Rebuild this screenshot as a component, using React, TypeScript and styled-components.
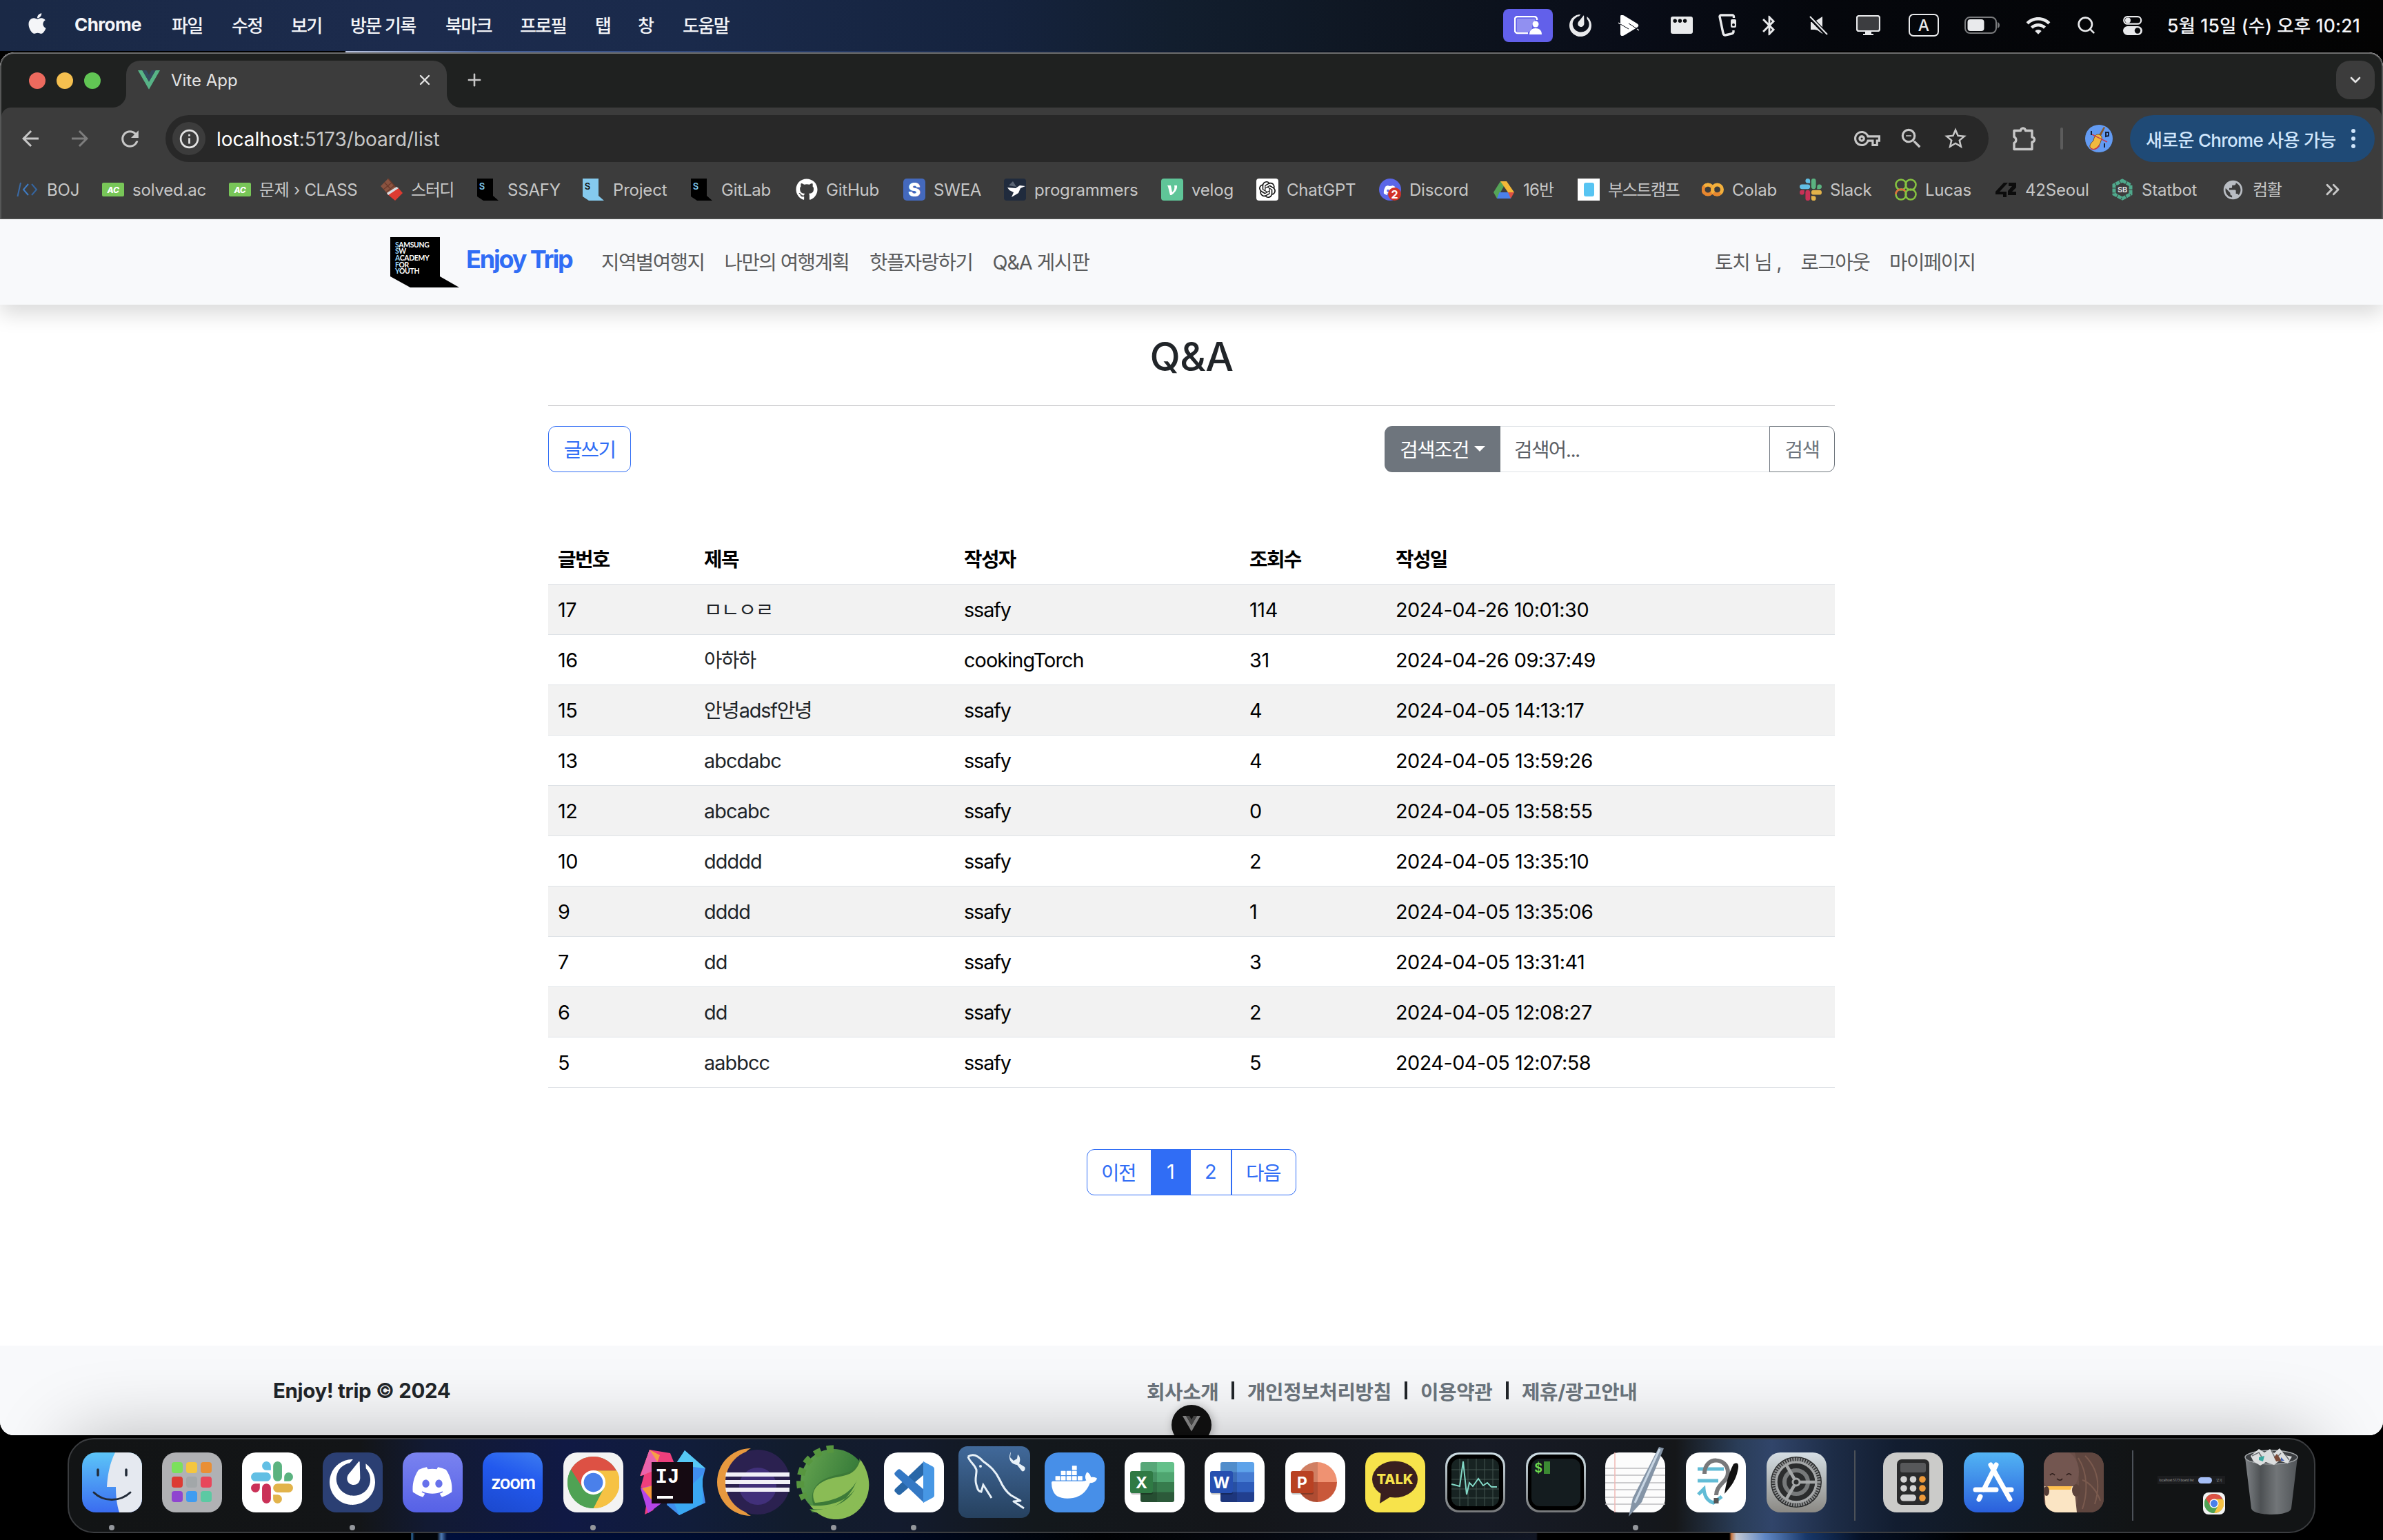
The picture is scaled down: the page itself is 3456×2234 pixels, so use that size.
import React from 'react';
import styled, { createGlobalStyle, css } from 'styled-components';
import { FaApple, FaGithub, FaDiscord } from 'react-icons/fa';
import { SiMattermost, SiDocker, SiOpenai } from 'react-icons/si';
import {
  MdArrowBack, MdArrowForward, MdRefresh, MdOutlineVpnKey, MdStarBorder,
  MdZoomOut, MdOutlineInfo, MdPublic, MdBluetooth, MdWifi,
} from 'react-icons/md';
import { Search, X, Plus, ChevronDown, ChevronsRight } from 'lucide-react';

const SANS = `Inter, 'Noto Sans CJK KR', sans-serif`;
const BLUE = '#306df5';

const GlobalStyle = createGlobalStyle`
  * { box-sizing: border-box; }
  body { margin: 0; background: #000; font-family: ${SANS}; }
  svg { display: block; flex: none; }
  a { color: inherit; text-decoration: none; }
`;

/* ---------- desktop and menu bar ---------- */

const Desktop = styled.div`
  width: 3456px;
  height: 2234px;
  overflow: hidden;
  display: flex;
  flex-direction: column;
  background:
    linear-gradient(90deg, transparent 596px, #3f8fd0 597px, #0a1b33 600px, #03060c 602px, #03060c 634px, #5b8ed0 640px, #001245 648px, #00103c 900px, #000b26 1290px, #020305 1600px, #0a0f1b 1960px, #141a29 2228px, #000 2230px, #000 2508px, #e8894a 2511px, #dfe6f2 2518px, #6d9ae0 2560px, #1c4078 2620px, #07142c 2700px, #000 2860px) 0 100% / 100% 12px no-repeat,
    #000;
`;

const MenuBar = styled.header`
  height: 76px;
  flex: none;
  display: flex;
  align-items: center;
  padding-bottom: 3px;
  color: #f4f5f8;
  font-size: 26px;
  font-weight: 500;
  white-space: nowrap;
  background:
    linear-gradient(90deg, #000 500px, #b9c4e0 502px, #47629c 700px, #2a4171 1100px, #0f1b30 1700px, #000 2300px) 0 100% / 100% 2px no-repeat,
    linear-gradient(90deg, #1a2946 0, #1c2b4d 600px, #1a2a4b 1000px, #15233e 1450px, #121e2e 1700px, #0e1520 2050px, #090d18 2350px, #05070c 2650px, #030303 3456px);
`;

const AppleMark = styled.span`
  width: 34px;
  margin: 0 37px 5px 37px;
`;

const MenuItem = styled.span<{ $w: number; $bold?: boolean }>`
  width: ${p => p.$w}px;
  padding-bottom: 3px;
  font-weight: ${p => (p.$bold ? 700 : 500)};
  letter-spacing: ${p => (p.$bold ? '-0.6px' : '-1.6px')};
`;

const StatusArea = styled.div`
  margin-left: auto;
  display: flex;
  align-items: center;
  padding-right: 33px;
`;

const StatusSlot = styled.span<{ $w: number }>`
  width: ${p => p.$w}px;
  display: flex;
  justify-content: center;
  color: #e9eaec;
`;

const SharePill = styled.span`
  width: 72px;
  height: 48px;
  border-radius: 8px;
  background: #6260ea;
  display: flex;
  align-items: center;
  justify-content: center;
`;

const InputSource = styled.span`
  width: 44px;
  height: 33px;
  border: 2px solid #e9eaec;
  border-radius: 7px;
  display: flex;
  align-items: center;
  justify-content: center;
  font-size: 23px;
  font-weight: 500;
`;

const Clock = styled.span`
  width: 280px;
  margin-left: 20px;
  padding-bottom: 3px;
  font-size: 26.5px;
  letter-spacing: 0.15px;
`;

/* ---------- browser window ---------- */

const Window = styled.section`
  height: 2006px;
  flex: none;
  display: flex;
  flex-direction: column;
  border-radius: 20px;
  overflow: hidden;
  background: #fff;
`;

const BrowserHead = styled.div`
  height: 242px;
  flex: none;
  background: #1f2120;
  border: 2px solid #565757;
  border-top-color: #6d6d6e;
  border-bottom: 0;
  border-radius: 20px 20px 0 0;
  display: flex;
  flex-direction: column;
`;

const TabStrip = styled.div`
  height: 78px;
  display: flex;
  align-items: flex-end;
`;

const Lights = styled.div`
  width: 161px;
  height: 78px;
  padding-left: 40px;
  display: flex;
  align-items: center;
  gap: 16px;
`;

const Light = styled.i<{ $c: string }>`
  width: 24px;
  height: 24px;
  border-radius: 50%;
  background: ${p => p.$c};
`;

const TabFlare = styled.i<{ $side: 'left' | 'right' }>`
  width: 20px;
  height: 20px;
  background: radial-gradient(circle at ${p => (p.$side === 'left' ? '0 0' : '100% 0')}, transparent 19.5px, #3c3c3c 20.5px);
`;

const Tab = styled.div`
  width: 465px;
  height: 68px;
  padding: 0 20px 12px 17px;
  border-radius: 20px 20px 0 0;
  background: #3c3c3c;
  color: #e3e3e3;
  display: flex;
  align-items: center;
  font-size: 24px;
`;

const TabTitle = styled.span`
  flex: 1;
  margin-left: 16px;
`;

const NewTab = styled.span`
  margin-left: 6px;
  height: 68px;
  padding: 14px 0 0;
  color: #c7c7c7;
`;

const TabSearch = styled.span`
  width: 56px;
  height: 56px;
  margin: 0 10px 12px auto;
  border-radius: 20px;
  background: #3c3c3c;
  color: #e3e3e3;
  display: flex;
  align-items: center;
  justify-content: center;
`;

const Toolbar = styled.div`
  height: 92px;
  padding-left: 6px;
  border-radius: 14px 14px 0 0;
  background: #3c3c3c;
  display: flex;
  align-items: center;
`;

const ToolSlot = styled.span<{ $w: number; $dim?: boolean }>`
  width: ${p => p.$w}px;
  display: flex;
  justify-content: center;
  color: ${p => (p.$dim ? '#7d7d7d' : '#c7c7c7')};
`;

const Omnibox = styled.div`
  width: 2644px;
  height: 68px;
  margin-left: 16px;
  padding: 0 16px 0 10px;
  border-radius: 34px;
  background: #282828;
  display: flex;
  align-items: center;
`;

const SiteInfo = styled.span`
  width: 48px;
  height: 48px;
  border-radius: 50%;
  background: #3c3c3c;
  color: #e3e3e3;
  display: flex;
  align-items: center;
  justify-content: center;
`;

const Address = styled.span`
  flex: 1;
  margin-left: 16px;
  padding-top: 2px;
  font-size: 28px;
  letter-spacing: 0;
  color: #c7c7c7;
  b { font-weight: 400; color: #fff; }
`;

const ToolDivider = styled.i`
  width: 4px;
  height: 32px;
  border-radius: 2px;
  background: #5c5c5c;
`;

const UpdateButton = styled.span`
  width: 355px;
  height: 68px;
  margin-left: 25px;
  padding: 0 28px 0 23px;
  border-radius: 34px;
  background: #1f4a76;
  color: #cfe5fb;
  display: flex;
  align-items: center;
  justify-content: space-between;
  font-size: 26px;
  font-weight: 500;
  letter-spacing: -0.7px;
  white-space: nowrap;
`;

const Avatar = styled.span`
  margin-left: 32px;
`;

const BookmarkBar = styled.div`
  height: 72px;
  padding: 12px 0 0 22px;
  background: #3c3c3c;
  border-bottom: 2px solid #494a4a;
  display: flex;
  align-items: flex-start;
  color: #c7c7c7;
  font-size: 24px;
  line-height: 34px;
  white-space: nowrap;
`;

const Bookmark = styled.span<{ $w: number; $ls?: number }>`
  width: ${p => p.$w}px;
  display: flex;
  gap: 12px;
  letter-spacing: ${p => p.$ls ?? -0.2}px;
`;

/* ---------- page ---------- */

const Page = styled.div`
  position: relative;
  flex: 1;
  display: flex;
  flex-direction: column;
  color: #212529;
  font-size: 28.8px;
  overflow: hidden;
`;

const Navbar = styled.nav`
  height: 124px;
  flex: none;
  padding: 0 592px 0 566px;
  background: #f8f9fb;
  box-shadow: 0 14.4px 28.8px rgba(0, 0, 0, 0.15);
  display: flex;
  align-items: center;
  white-space: nowrap;
`;

const Brand = styled.a`
  width: 196px;
  margin: 0 0 8px 10px;
  color: ${BLUE};
  font-size: 36px;
  font-weight: 700;
  letter-spacing: -2.15px;
`;

const NavLink = styled.a<{ $w: number; $ls?: number }>`
  width: ${p => p.$w}px;
  margin-right: 30.5px;
  padding-bottom: 3px;
  color: #5a5b5c;
  letter-spacing: ${p => p.$ls ?? -1.6}px;
`;

const UserLinks = styled.div`
  margin-left: auto;
  display: flex;
  a:last-child { margin-right: 0; }
`;

const Board = styled.main`
  width: 1866px;
  margin: 0 auto;
  display: flex;
  flex-direction: column;
`;

const Title = styled.h2`
  height: 146px;
  margin: 0;
  padding-top: 4px;
  display: flex;
  align-items: center;
  justify-content: center;
  font-size: 57.6px;
  font-weight: 450;
  letter-spacing: -0.6px;
`;

const Rule = styled.hr`
  width: 100%;
  height: 1px;
  margin: 0;
  border: 0;
  background: #c7c8ca;
`;

const Controls = styled.div`
  margin-top: 29px;
  display: flex;
  justify-content: space-between;
`;

const button = css`
  height: 67px;
  padding-bottom: 2px;
  display: flex;
  align-items: center;
  justify-content: center;
  letter-spacing: -1.6px;
  white-space: nowrap;
`;

const WriteButton = styled.a`
  ${button}
  width: 120px;
  border: 1px solid ${BLUE};
  border-radius: 11px;
  color: ${BLUE};
`;

const SearchGroup = styled.div`
  display: flex;
`;

const Condition = styled.span`
  ${button}
  width: 168px;
  gap: 8px;
  border-radius: 11px 0 0 11px;
  background: #6e757d;
  color: #fff;
`;

const Caret = styled.i`
  border: 8px solid transparent;
  border-top-color: #fff;
  border-bottom: 0;
`;

const Keyword = styled.span`
  ${button}
  width: 391px;
  padding-left: 20px;
  justify-content: flex-start;
  border: 1px solid #dee2e6;
  border-width: 1px 0;
  color: #5c6066;
`;

const SearchButton = styled.span`
  ${button}
  width: 95px;
  margin-left: -1px;
  border: 1px solid #6e757d;
  border-radius: 0 11px 11px 0;
  color: #6e757d;
`;

const Table = styled.table`
  width: 1866px;
  margin-top: 90px;
  table-layout: fixed;
  border-collapse: separate;
  border-spacing: 0;
  color: #000;
  text-align: left;
  th, td {
    height: 73px;
    padding: 1px 0 0 14px;
    border-bottom: 1px solid #dee2e6;
    line-height: 40px;
    white-space: nowrap;
  }
  th { font-weight: 700; letter-spacing: -1.6px; }
  tbody tr:nth-child(odd) td { background: #f2f2f2; }
`;

const Cell = styled.td<{ $ls?: number; $link?: boolean }>`
  letter-spacing: ${p => p.$ls ?? -0.9}px;
  color: ${p => (p.$link ? '#212529' : '#000')};
`;

const Pager = styled.div`
  margin: 89px auto 0;
  width: 304px;
  height: 67px;
  border: 1px solid ${BLUE};
  border-radius: 11px;
  overflow: hidden;
  display: flex;
  color: ${BLUE};
`;

const PagerItem = styled.a<{ $w: number; $active?: boolean; $line?: boolean }>`
  width: ${p => p.$w}px;
  display: flex;
  align-items: center;
  justify-content: center;
  padding: 0 2px 2px 0;
  letter-spacing: -1.6px;
  background: ${p => (p.$active ? BLUE : 'transparent')};
  color: ${p => (p.$active ? '#fff' : BLUE)};
  border-left: ${p => (p.$line ? `2px solid ${BLUE}` : '0')};
`;

const Footer = styled.footer`
  height: 130px;
  margin-top: auto;
  padding-left: 396px;
  background: #f8f9fb;
  display: flex;
  align-items: center;
  font-weight: 700;
  white-space: nowrap;
`;

const Copyright = styled.span`
  width: 1267px;
  font-size: 29.5px;
  letter-spacing: -0.35px;
`;

const FooterLink = styled.a<{ $w: number }>`
  width: ${p => p.$w}px;
  color: #6c757d;
  letter-spacing: -0.4px;
`;

const FooterBar = styled.i`
  width: 4px;
  height: 26px;
  margin: 0 19px;
  background: #212529;
`;

const DevtoolsButton = styled.div`
  position: absolute;
  left: 1699px;
  bottom: -14px;
  width: 58px;
  height: 58px;
  border-radius: 50%;
  background: #111;
  box-shadow: 2px 2px 14px rgba(0, 0, 0, 0.3);
  display: flex;
  justify-content: center;
  padding-top: 16px;
`;

/* ---------- dock ---------- */

const DockArea = styled.div`
  position: relative;
  padding-top: 4px;
  display: flex;
  justify-content: center;
`;

const DockBar = styled.div`
  width: 3260px;
  height: 138px;
  padding: 0 4px;
  border: 2px solid #3b3d40;
  border-radius: 38px;
  box-shadow: 0 0 110px rgba(0, 0, 0, 0.28);
  background: linear-gradient(90deg, #121415 0, #131517 420px, #121a33 520px, #101944 720px, #111d3a 900px, #121c2c 1060px, #131b2e 1200px, #13181c 1400px, #14161a 1700px, #171b26 2050px, #14171c 2300px, #151719 2330px, #2a3d58 2420px, #31456a 2470px, #1d2c46 2560px, #121d30 2650px, #111820 2800px, #121415 3000px);
  display: flex;
`;

const DockSlot = styled.div`
  width: 116.35px;
  display: flex;
  flex-direction: column;
  align-items: center;
`;

const DockIcon = styled.div`
  height: 122px;
  padding-top: 2px;
  display: flex;
  align-items: center;
`;

const RunningDot = styled.i`
  width: 8px;
  height: 8px;
  margin-top: 2px;
  border-radius: 50%;
  background: #94979c;
`;

const DockDivider = styled.i`
  width: 2px;
  height: 102px;
  margin: 16px 25.8px;
  background: #4c5158;
`;

const Tile = styled.div<{ $bg: string }>`
  width: 87px;
  height: 87px;
  border-radius: 20px;
  background: ${p => p.$bg};
  display: flex;
  align-items: center;
  justify-content: center;
  overflow: hidden;
  color: #fff;
`;

const ZoomWord = styled.span`
  font-size: 26px;
  font-weight: 600;
  letter-spacing: -1.4px;
`;

const LaunchGrid = styled.div`
  display: grid;
  grid-template-columns: repeat(3, 16px);
  gap: 5px;
`;

const LaunchDot = styled.i<{ $c: string }>`
  height: 16px;
  border-radius: 4px;
  background: ${p => p.$c};
`;

const Minimized = styled.div`
  width: 98px;
  height: 56px;
  margin-top: 38px;
  display: flex;
  flex-direction: column;
  align-items: flex-end;
  justify-content: space-between;
`;

const MiniBar = styled.div`
  width: 98px;
  height: 12px;
  padding: 0 4px 0 3px;
  background: #1c1d1f;
  color: #aaa;
  display: flex;
  align-items: center;
  justify-content: space-between;
  font-size: 4.4px;
  white-space: nowrap;
`;

const MiniPill = styled.i`
  width: 20px;
  height: 9px;
  border-radius: 5px;
  background: #a5bef5;
`;

const MiniTile = styled.div`
  width: 32px;
  height: 32px;
  border-radius: 8px;
  background: #f3f3f3;
  display: flex;
  align-items: center;
  justify-content: center;
`;

/* ---------- drawings ---------- */

const VueMark = ({ w, a = '#57b386', b = '#34495e' }: { w: number; a?: string; b?: string }) => (
  <svg width={w} height={w * 0.866} viewBox="0 0 32 27.7">
    <path d="M0 0h6.4L16 16.6 25.6 0H32L16 27.7z" fill={a} />
    <path d="M6.4 0h5.9L16 6.4 19.7 0h5.9L16 16.6z" fill={b} />
  </svg>
);

const ChromeMark = ({ s }: { s: number }) => (
  <svg width={s} height={s} viewBox="0 0 100 100">
    <circle cx="50" cy="50" r="50" fill="#4fa254" />
    <path d="M50 27H95.500A50 50 0 0 1 50 100L70 61z" fill="#f6c244" />
    <path d="M50 27H94.500A50 50 0 0 0 6.700 25L29 62z" fill="#dd5144" />
    <path d="M6.700 25L30 61.500 50 73 70 61.500 50 100A50 50 0 0 1 6.700 25z" fill="#4fa254" />
    <circle cx="50" cy="50" r="23.500" fill="#fff" />
    <circle cx="50" cy="50" r="18.500" fill="#4a80ea" />
  </svg>
);

const SlackMark = ({ s }: { s: number }) => (
  <svg width={s} height={s} viewBox="0 0 122.800 122.800">
    <path fill="#ca3157" d="M25.800 77.600a12.900 12.900 0 1 1-12.900-12.900h12.900zM32.300 77.600a12.900 12.900 0 0 1 25.800 0v32.300a12.900 12.900 0 0 1-25.800 0z" />
    <path fill="#62bfe4" d="M45.200 25.800a12.900 12.900 0 1 1 12.900-12.900v12.900zM45.200 32.300a12.900 12.900 0 0 1 0 25.800H12.900a12.900 12.900 0 0 1 0-25.800z" />
    <path fill="#5bb380" d="M97 45.200a12.900 12.900 0 1 1 12.900 12.900H97zM90.500 45.200a12.900 12.900 0 0 1-25.800 0V12.900a12.900 12.900 0 0 1 25.800 0z" />
    <path fill="#e2b34a" d="M77.600 97a12.900 12.900 0 1 1-12.900 12.900V97zM77.600 90.500a12.900 12.900 0 0 1 0-25.800h32.300a12.900 12.900 0 0 1 0 25.800z" />
  </svg>
);

const Puzzle = () => (
  <svg width="36" height="38" viewBox="0 0 36 38" fill="none" stroke="#c7c7c7" strokeWidth="3.400" strokeLinejoin="round">
    <path d="M3 7.500h9.500a3.500 3.500 0 0 1 7 0H29v9.500a3.500 3.500 0 0 1 0 7v10.500H3v-9a5 5 0 0 0 0-9z" />
  </svg>
);

const svgText = { fontFamily: SANS, textAnchor: 'middle' as const };

const Ssafy = ({ c, t }: { c: string; t: string }) => (
  <svg width="32" height="32" viewBox="0 0 32 32">
    <path d="M0 0h23v25l8 7H9l-9-6z" fill={c} />
    <text x="7" y="16" fontSize="13" fontWeight="600" fill={t} {...svgText}>S</text>
  </svg>
);

const Ac = () => (
  <svg width="32" height="32" viewBox="0 0 32 32">
    <rect y="6" width="32" height="20" rx="2" fill="#78c658" />
    <text x="16" y="20.500" fontSize="12" fontWeight="800" fontStyle="italic" fill="#fff" {...svgText}>AC</text>
  </svg>
);

const markIcons: Record<string, React.ReactNode> = {
  boj: (
    <svg width="32" height="32" viewBox="0 0 32 32" fill="none" strokeWidth="2">
      <path d="M6 6L1.500 26" stroke="#3a6ba8" /><path d="M17 8l-7 8 7 8" stroke="#3f7cc4" /><path d="M22 8l7 8-7 8" stroke="#3565a0" />
    </svg>
  ),
  ac: <Ac />,
  choco: (
    <svg width="32" height="32" viewBox="0 0 32 32">
      <path d="M11 0L24 15 10 22 0 11z" fill="#8a5340" /><path d="M5.500 5.500l12 13M11 0l12 14M16 6L4 16M20 10L8 20" stroke="#6b3a2b" strokeWidth="1.200" />
      <path d="M25 13l7 8-11 11L9 22z" fill="#dd3b31" /><path d="M23 12l3 2L11 24l-2-3z" fill="#d9dde2" />
    </svg>
  ),
  ssafy: <Ssafy c="#000" t="#7ec8ee" />,
  project: <Ssafy c="#85caee" t="#111" />,
  github: <FaGithub size={32} color="#fff" />,
  swea: (
    <svg width="32" height="32" viewBox="0 0 32 32"><rect width="32" height="32" rx="5" fill="#4469bd" />
      <text x="16" y="25.500" fontSize="27" fontWeight="900" fill="#fff" {...svgText}>S</text></svg>
  ),
  prog: (
    <svg width="32" height="32" viewBox="0 0 32 32"><rect width="32" height="32" rx="4" fill="#202b3d" />
      <path d="M7 10l6-6 5 8z" fill="#5c6675" /><path d="M5 13l12 1 6-4 8 1-7 3-3 7-10 6 3-7-6-3z" fill="#fff" /></svg>
  ),
  velog: (
    <svg width="32" height="32" viewBox="0 0 32 32"><rect width="32" height="32" rx="4" fill="#5fc598" />
      <path d="M9 10h5l2 10c3-3 4-6 3-10h4c1 6-4 11-8 14h-2L10 12z" fill="#fff" /></svg>
  ),
  gpt: (
    <svg width="32" height="32" viewBox="0 0 32 32"><rect width="32" height="32" rx="4" fill="#fff" />
      <g transform="translate(4 4)"><SiOpenai size={24} color="#111" /></g></svg>
  ),
  discord: (
    <svg width="32" height="32" viewBox="0 0 32 32"><circle cx="16" cy="16" r="16" fill="#5b66e8" />
      <g transform="translate(6 7)"><FaDiscord size={20} color="#fff" /></g>
      <circle cx="22.500" cy="22.500" r="9.500" fill="#d13228" /><text x="22.500" y="28.500" fontSize="16" fontWeight="700" fill="#fff" {...svgText}>2</text></svg>
  ),
  drive: (
    <svg width="32" height="32" viewBox="0 0 32 32"><path d="M11 4h9l-9.500 17L6 29 1 20z" fill="#55a457" /><path d="M11 4h9l11 16h-9z" fill="#f3b838" />
      <path d="M21 20h10l-5 9h-8z" fill="#dd5144" /><path d="M9.500 20H22l4 9H6z" fill="#4a80ea" /></svg>
  ),
  boost: (
    <svg width="32" height="32" viewBox="0 0 32 32"><rect width="32" height="32" fill="#fff" /><rect x="9" y="6" width="15" height="20" rx="3" fill="#57c4f2" /></svg>
  ),
  colab: (
    <svg width="32" height="32" viewBox="0 0 32 32" fill="none" strokeWidth="5"><circle cx="9" cy="16" r="7" stroke="#e7872f" />
      <path d="M4 11a7 7 0 0 1 10 0" stroke="#f3b03c" /><circle cx="22.500" cy="16" r="7" stroke="#f3b03c" /><path d="M27 21a7 7 0 0 1-10 0" stroke="#e7872f" /></svg>
  ),
  slack: <SlackMark s={32} />,
  lucas: (
    <svg width="32" height="32" viewBox="0 0 32 32" fill="none" strokeWidth="2.600" stroke="#86c340"><circle cx="9" cy="9" r="7.500" /><circle cx="23" cy="9" r="7.500" />
      <circle cx="23" cy="23" r="7.500" /><circle cx="9" cy="23" r="7.500" /><path d="M9 15.500a7.500 7.500 0 0 0-7.500 7.500M9 15.500a7.500 7.500 0 0 1 6 3" stroke="#e06d3b" /></svg>
  ),
  seoul: (
    <svg width="32" height="32" viewBox="0 0 32 32" fill="#0c0c0c"><path d="M13 6h6L7 19h10v8h-5v-4H1v-4z" /><path d="M20 6h11v7l-6 6h6v5H19v-6l6-7h-5z" /></svg>
  ),
  statbot: (
    <svg width="32" height="32" viewBox="0 0 32 32"><path d="M16 3l12 6.500v13L16 29 4 22.500v-13z" fill="none" stroke="#4fa98c" strokeWidth="5" strokeDasharray="6 1" />
      <path d="M16 6l9 5v10l-9 5-9-5V11z" fill="#3c3c3c" /><text x="16" y="20" fontSize="11" fontWeight="700" fill="#ddd" {...svgText}>SB</text></svg>
  ),
  globe: <MdPublic size={33} color="#b9bdc3" />,
};

const bookmarks: [string, string, number, number?][] = [
  ['boj', 'BOJ', 124], ['ac', 'solved.ac', 184], ['ac', '문제 › CLASS', 220, -0.3], ['choco', '스터디', 140, -1.4],
  ['ssafy', 'SSAFY', 153], ['project', 'Project', 157], ['ssafy', 'GitLab', 152], ['github', 'GitHub', 156],
  ['swea', 'SWEA', 146], ['prog', 'programmers', 228], ['velog', 'velog', 138], ['gpt', 'ChatGPT', 178],
  ['discord', 'Discord', 165], ['drive', '16반', 123, -0.8], ['boost', '부스트캠프', 180, -1.4], ['colab', 'Colab', 142],
  ['slack', 'Slack', 138], ['lucas', 'Lucas', 145], ['seoul', '42Seoul', 169], ['statbot', 'Statbot', 160], ['globe', '컴활', 145, -1.4],
];

const menus: [string, number][] = [
  ['파일', 87], ['수정', 86], ['보기', 86], ['방문 기록', 138], ['북마크', 108], ['프로필', 109], ['탭', 62], ['창', 65], ['도움말', 80],
];

const StatusIcons = () => (
  <>
    <StatusSlot $w={72}>
      <SharePill>
        <svg width="40" height="28" viewBox="0 0 40 28" fill="none">
          <path d="M20 25H5a4 4 0 0 1-4-4V5a4 4 0 0 1 4-4h24a4 4 0 0 1 4 4v1" stroke="#fff" strokeWidth="2.500" />
          <path d="M4 4h26v4l-4 4v6l-4 5H4z" fill="#9190f1" /><circle cx="31" cy="12" r="4.500" fill="#fff" /><path d="M22 27c0-6 4-9 9-9s9 3 9 9z" fill="#fff" />
        </svg>
      </SharePill>
    </StatusSlot>
    <StatusSlot $w={80}><SiMattermost size={32} /></StatusSlot>
    <StatusSlot $w={60}>
      <svg width="30" height="30" viewBox="0 0 30 30"><path d="M4 0h2c1 0 2 0 3 1l18 11c3 2 3 4 0 6L9 29c-4 2-6 1-6-2V3c0-1 0-3 1-3z" fill="#fff" /><path d="M3 13l12 7M15 12l14 9" stroke="#080b14" strokeWidth="1" fill="none" /><path d="M0 11l3 2M27 20l3 2" stroke="#fff" strokeWidth="1.200" /></svg>
    </StatusSlot>
    <StatusSlot $w={93}>
      <svg width="32" height="25" viewBox="0 0 32 25"><rect width="32" height="25" rx="3" fill="#e9eaec" /><circle cx="6.200" cy="6.200" r="2.700" fill="#0a0c10" /><circle cx="13.400" cy="6.200" r="2.700" fill="#0a0c10" /><circle cx="20.600" cy="6.200" r="2.700" fill="#0a0c10" /></svg>
    </StatusSlot>
    <StatusSlot $w={40}>
      <svg width="27" height="33" viewBox="0 0 27 33" fill="none" stroke="#e9eaec" strokeWidth="3.400"><path d="M22.500 6V4a2 2 0 0 0-2-2H4a2 2 0 0 0-2 2l5 24c.500 2 1.500 3 3 3l9-2c2-.500 3-1.500 3-3v-2" /><rect x="18" y="8" width="8" height="12" rx="2" fill="#e9eaec" stroke="none" /><circle cx="22" cy="16" r="2" fill="#080a10" stroke="none" /></svg>
    </StatusSlot>
    <StatusSlot $w={82}><MdBluetooth size={34} /></StatusSlot>
    <StatusSlot $w={59}>
      <svg width="28" height="28" viewBox="0 0 28 28"><path d="M3 9h5l12-8v25l-7-5-4-1H3z" fill="#e9eaec" /><path d="M1 1l25 26" stroke="#06080d" strokeWidth="6" /><path d="M2 1l25 26" stroke="#e9eaec" strokeWidth="2" /></svg>
    </StatusSlot>
    <StatusSlot $w={87}>
      <svg width="35" height="30" viewBox="0 0 35 30"><rect x="1" y="1" width="33" height="22" rx="3" fill="#3c3d40" stroke="#e9eaec" strokeWidth="2.200" /><path d="M13 23h9v4h3v2H10v-2h3z" fill="#e9eaec" /></svg>
    </StatusSlot>
    <StatusSlot $w={74}><InputSource>A</InputSource></StatusSlot>
    <StatusSlot $w={96}>
      <svg width="52" height="26" viewBox="0 0 52 26"><rect x="1" y="1" width="45" height="23" rx="7" fill="none" stroke="#7a7b7d" strokeWidth="2" /><rect x="4.500" y="4" width="24" height="17" rx="4" fill="#e9eaec" /><path d="M48 8c4 1 4 8 0 9z" fill="#7a7b7d" /></svg>
    </StatusSlot>
    <StatusSlot $w={66}><MdWifi size={38} /></StatusSlot>
    <StatusSlot $w={73}><Search size={29} strokeWidth={2.200} /></StatusSlot>
    <StatusSlot $w={61}>
      <svg width="28" height="28" viewBox="0 0 28 28"><rect x="1.200" y="1.200" width="25" height="10.500" rx="5.200" fill="none" stroke="#e9eaec" strokeWidth="2.200" /><circle cx="7" cy="6.500" r="4" fill="#e9eaec" /><rect y="15" width="28" height="13" rx="6.500" fill="#e9eaec" /><circle cx="21" cy="21.500" r="4.200" fill="#08090b" /></svg>
    </StatusSlot>
  </>
);

/* ---------- dock apps ---------- */

const Office = ({ letter, dark, cells, round }: { letter: string; dark: string; cells: string[]; round?: boolean }) => (
  <svg width="87" height="87" viewBox="0 0 87 87">
    <defs><clipPath id={`o${letter}`}>{round ? <circle cx="46" cy="43" r="29" /> : <rect x="23" y="14" width="49" height="58" rx="3" />}</clipPath></defs>
    <g clipPath={`url(#o${letter})`}>
      {cells.map((c, i) => <rect key={i} x="17" y={14 + (i * 58) / cells.length} width="58" height={58 / cells.length + 0.5} fill={c} />)}
      <rect x="17" y="14" width="30" height="58" fill="#000" opacity=".13" />
    </g>
    <rect x="9" y="29" width="32" height="32" rx="3" fill="#000" opacity=".25" />
    <rect x="8" y="27" width="33" height="32" rx="3" fill={dark} />
    <text x="24.500" y="51.500" fontSize="23" fontWeight="700" fill="#fff" {...svgText}>{letter}</text>
  </svg>
);

const launchColors = ['#7be05c', '#f4c63f', '#e98f35', '#dc3b33', '#a2a7a9', '#e8475b', '#8f45d0', '#3f9cf0', '#5cc9a3'];

const Spring = () => (
  <svg width="108" height="108" viewBox="0 0 108 108">
    <defs><linearGradient id="sp" x1="0" y1="0" x2="1" y2="0.400"><stop offset="0" stopColor="#67a650" /><stop offset="1" stopColor="#2f7436" /></linearGradient></defs>
    <circle cx="54" cy="54" r="48" fill="url(#sp)" />
    <path d="M54 6A48 48 0 0 0 12 78" fill="none" stroke="#57963f" strokeWidth="11" strokeDasharray="10 8.500" />
    <path d="M94 23c20 30 12 62-12 78-22 13-46 8-62-13 40 2 70-20 74-65z" fill="#8abc55" />
    <path d="M92 19C86 40 74 40 53 45 28 52 18 68 25 88c20 2 64-6 68-46-2 34-24 55-74 51l4 5C70 94 94 60 92 19z" fill="#3c7a38" />
    <path d="M93 21c-7 23-20 23-40 27-24 6-34 20-26 36 18-1 54-8 64-40-5 36-32 49-70 51 44 21 92-12 72-74z" fill="#8abc55" />
  </svg>
);

const apps: { name: string; node: React.ReactNode; on?: boolean }[] = [
  { name: 'finder', on: true, node: (
    <Tile $bg="linear-gradient(#5cc5f8, #3a6cf0)"><svg width="87" height="87" viewBox="0 0 87 87">
      <path d="M48 0c-8 16-11 33-12 50h13c0 12 1 24 5 37h33V0z" fill="#e5e9f0" />
      <path d="M23 25v8M64 25v8" stroke="#222b38" strokeWidth="3.500" strokeLinecap="round" /><path d="M17 58c14 14 38 14 53 0" stroke="#222b38" strokeWidth="3" fill="none" strokeLinecap="round" /></svg></Tile>) },
  { name: 'launchpad', node: <Tile $bg="#b0b1b4"><LaunchGrid>{launchColors.map(c => <LaunchDot key={c} $c={c} />)}</LaunchGrid></Tile> },
  { name: 'slack', node: <Tile $bg="#fff"><SlackMark s={61} /></Tile> },
  { name: 'mattermost', on: true, node: <Tile $bg="#2b3f73"><SiMattermost size={66} /></Tile> },
  { name: 'discord', node: <Tile $bg="linear-gradient(#7a83f0, #5661e6)"><FaDiscord size={62} /></Tile> },
  { name: 'zoom', node: <Tile $bg="linear-gradient(20deg, #1b48cc, #2259ee 60%, #3d7cf0)"><ZoomWord>zoom</ZoomWord></Tile> },
  { name: 'chrome', on: true, node: <Tile $bg="#f3f3f3"><ChromeMark s={75} /></Tile> },
  { name: 'intellij', node: (
    <svg width="98" height="98" viewBox="0 0 98 98">
      <path d="M15 2l30 5 8 20L20 90 8 96l6-37-12-2 5-18-6 1z" fill="#ee3f7c" /><path d="M15 2L2 40l20-8 8-22z" fill="#f6a046" /><path d="M15 2l17 26-30 12z" fill="#e64fd0" opacity=".75" />
      <path d="M2 58l14-4 24 20-27 20z" fill="#b545e8" /><path d="M4 58l15-4v22z" fill="#f79a3c" /><path d="M66 3l30 26-5 20 5 30-38 18-18-15 10-50z" fill="#3f8ef0" /><path d="M66 3L52 24l44 5z" fill="#56c8f4" /><path d="M50 78l42-40v42L58 97z" fill="#3aa8f2" />
      <rect x="18" y="20" width="60" height="60" fill="#150a12" /><text x="41" y="50" fontSize="29" fontWeight="700" fontFamily="'Liberation Mono', monospace" fill="#fff" textAnchor="middle">IJ</text><path d="M26 69h23v4H26z" fill="#fff" />
    </svg>) },
  { name: 'eclipse', node: (
    <svg width="108" height="98" viewBox="0 0 108 98"><path d="M50 0A49 49 0 0 0 50 98C22 84 22 14 50 0z" fill="#e8993f" />
      <circle cx="60" cy="49" r="47" fill="#2b2150" /><circle cx="60" cy="55" r="27" fill="#41307a" />
      <path d="M14 35h92v6H13zM13 46h94v6H13zM13 57h93v6H14z" fill="#f1f0f7" /></svg>) },
  { name: 'spring', on: true, node: <Spring /> },
  { name: 'vscode', on: true, node: (
    <Tile $bg="#fff"><svg width="62" height="62" viewBox="0 0 62 62"><path d="M46 1L4 41c-1 2-1 3 0 4l4 4c1 1 3 1 4 0l34-29z" fill="#2867a8" /><path d="M46 61L4 21c-1-2-1-3 0-4l4-4c1-1 3-1 4 0l34 29z" fill="#3478c4" /><path d="M45 1l13 7c2 1 3 2 3 4v38c0 2-1 3-3 4l-13 7z" fill="#4797e4" /></svg></Tile>) },
  { name: 'mysql', node: (
    <svg width="104" height="104" viewBox="0 0 104 104"><defs><linearGradient id="my" x1="0" y1="0" x2="0" y2="1"><stop offset="0" stopColor="#41699a" /><stop offset="1" stopColor="#26415f" /></linearGradient></defs>
      <rect width="104" height="104" rx="13" fill="url(#my)" /><path d="M14 15c7-5 15-1 22 7 10 7 18 14 24 27 4 9 8 16 16 22l14 8-10 1 15 10" fill="none" stroke="#e8f1f8" strokeWidth="3" strokeLinejoin="round" />
      <path d="M14 15c2 8 9 10 12 19 1 6-3 13 0 22 2 6 2 9 7 10l3-10 12 19" fill="none" stroke="#e8f1f8" strokeWidth="3" /><circle cx="32" cy="29" r="2" fill="#e8f1f8" />
      <path d="M76 8l-1 8 5 5 5-3 1-6c4 3 4 9 2 13l8 5c2 3-1 8-4 6l-7-9c-9-1-14-9-9-19z" fill="#e8f1f8" /></svg>) },
  { name: 'docker', node: <Tile $bg="#478fe8"><SiDocker size={66} /></Tile> },
  { name: 'excel', node: <Tile $bg="#fff"><Office letter="X" dark="#2f7a44" cells={['#64c08a', '#4fa570', '#377c4d', '#2c5a3a']} /></Tile> },
  { name: 'word', node: <Tile $bg="#fff"><Office letter="W" dark="#264fb0" cells={['#5ea3ea', '#467cd2', '#2e5cba', '#223f8f']} /></Tile> },
  { name: 'ppt', node: <Tile $bg="#fff"><Office letter="P" dark="#b94122" cells={['#ef9272', '#c9583a']} round /></Tile> },
  { name: 'kakao', node: (
    <Tile $bg="#f7e34b"><svg width="70" height="66" viewBox="0 0 70 66"><ellipse cx="35" cy="29" rx="33" ry="26.500" fill="#3a1f1f" /><path d="M15 46l-2 18 16-10z" fill="#3a1f1f" /><text x="35" y="36" fontSize="20" fontWeight="800" fill="#f7e34b" {...svgText}>TALK</text></svg></Tile>) },
  { name: 'activity', node: (
    <Tile $bg="linear-gradient(#cfdfe6, #77797b)"><svg width="81" height="81" viewBox="0 0 81 81"><rect width="81" height="81" rx="18" fill="#000" /><rect x="6" y="6" width="69" height="69" rx="12" fill="#172322" />
      <path d="M18 6v69M30 6v69M42 6v69M54 6v69M66 6v69M6 22h69M6 36h69M6 50h69M6 63h69" stroke="#43544f" /><path d="M6 43l12 3 5-36 5 48 4-17 5 5 8-11 7 10 6-4 6 6h8" stroke="#82d8c6" strokeWidth="2" fill="none" /></svg></Tile>) },
  { name: 'iterm', node: (
    <Tile $bg="linear-gradient(#cfdfe6, #77797b)"><svg width="81" height="81" viewBox="0 0 81 81"><rect width="81" height="81" rx="18" fill="#000" /><rect x="5" y="6" width="71" height="69" rx="12" fill="#141c1f" />
      <text x="15" y="26" fontSize="18" fontWeight="600" fill="#6fdc4f" {...svgText}>$</text><rect x="23" y="10" width="9" height="18" fill="#3c8a33" /></svg></Tile>) },
  { name: 'textedit', on: true, node: (
    <svg width="90" height="104" viewBox="0 0 90 104"><rect x="1" y="9" width="87" height="87" rx="20" fill="#fcfcfc" /><path d="M1 32h87M1 42h87M1 53h87M1 63h87M1 74h87M1 84h87" stroke="#bcbcbe" strokeWidth="1.600" /><path d="M15 9v87" stroke="#f0b9b5" strokeWidth="1.500" />
      <path d="M79 1l7 2-32 78-19 21 6-27z" fill="#8494a6" /><path d="M80 4L44 82" stroke="#c8d6e4" strokeWidth="3" /></svg>) },
  { name: 'grammar', node: (
    <Tile $bg="#fff"><svg width="87" height="87" viewBox="0 0 87 87" fill="none"><path d="M17 24h38M17 41h30M18 61l8-8c1 12 7 18 14 20l12-9" stroke="#62bcd6" strokeWidth="5" /><path d="M27 31c0-27 34-24 34-2 0 14-17 17-17 33" stroke="#77787a" strokeWidth="6" /><path d="M44 66v8" stroke="#555" strokeWidth="7" /><path d="M69 17c8-5 8 3 6 10-2 11-8 21-19 33 2-14 6-30 13-43z" fill="#111" /></svg></Tile>) },
  { name: 'settings', node: (
    <Tile $bg="linear-gradient(#d5dee4, #8b8984)"><svg width="80" height="80" viewBox="0 0 80 80" fill="none"><circle cx="40" cy="40" r="37" fill="#2b2c2d" /><circle cx="40" cy="40" r="33" stroke="#8c8e8f" strokeWidth="5" strokeDasharray="2.200 1.400" /><circle cx="40" cy="40" r="29" stroke="#a5a7a8" strokeWidth="3.500" /><circle cx="40" cy="40" r="17" stroke="#77797a" strokeWidth="6" />
      <path d="M40 40h29M40 40L25.500 15M40 40L25.500 65" stroke="#a5a7a8" strokeWidth="4.500" /><circle cx="40" cy="40" r="5" fill="#2b2c2d" stroke="#a5a7a8" strokeWidth="3" /></svg></Tile>) },
  { name: '|', node: null },
  { name: 'calculator', node: (
    <Tile $bg="#cbcbc9"><svg width="47" height="66" viewBox="0 0 47 66"><rect width="47" height="66" rx="7" fill="#2a2b2c" /><rect x="5" y="5" width="37" height="14" rx="3" fill="#57585a" />
      {[29, 42].map(y => [10, 23.500, 37].map((x, i) => <circle key={`${x}${y}`} cx={x} cy={y} r="4.800" fill={i === 2 ? '#ee9a3a' : '#d2d2d2'} />))}
      <rect x="5" y="51" width="23" height="9.600" rx="4.800" fill="#d2d2d2" /><circle cx="37" cy="56" r="4.800" fill="#ee9a3a" /></svg></Tile>) },
  { name: 'appstore', node: (
    <Tile $bg="linear-gradient(#52b4f4, #2a5fdc)"><svg width="66" height="66" viewBox="0 0 66 66" stroke="#fff" strokeWidth="7" strokeLinecap="round"><path d="M37 8L19 44M29 8l28 50M7 44h30M50 44h9M12 58l2-4" /></svg></Tile>) },
  { name: 'squirrel', node: (
    <Tile $bg="#6b4f48"><svg width="87" height="87" viewBox="0 0 87 87"><path d="M45 0h42v87H45c8-30 8-58 0-87z" fill="#5f463f" /><path d="M50 8c14 22 14 50 6 74M60 5c20 20 22 44 14 70M56 40c12 4 22 18 26 30" stroke="#7a5a4e" strokeWidth="2" fill="none" />
      <ellipse cx="24" cy="28" rx="27" ry="32" fill="#735650" /><path d="M1 49h43l4 38H3z" fill="#fbe5c4" /><path d="M5 49h36l-2 5H6z" fill="#ffc04f" /><path d="M9 33c2-3 5-3 7 0M33 33c2-3 5-3 7 0M19 38c3 3 6 3 8 0" stroke="#2c1c19" strokeWidth="1.600" fill="none" /><ellipse cx="4" cy="56" rx="4" ry="7" fill="#553d37" /><ellipse cx="47" cy="55" rx="6" ry="9" fill="#5c433c" /></svg></Tile>) },
  { name: '|', node: null },
  { name: 'minimized', node: (
    <Minimized><MiniBar>localhost:5173 board list<MiniPill /><span>닫기</span></MiniBar>
      <MiniTile><ChromeMark s={28} /></MiniTile></Minimized>) },
  { name: 'trash', node: (
    <svg width="80" height="100" viewBox="0 0 80 100"><defs><linearGradient id="tr"><stop offset="0" stopColor="#8b8f93" /><stop offset=".3" stopColor="#54585b" /><stop offset=".6" stopColor="#7c8083" /><stop offset="1" stopColor="#585c60" /></linearGradient></defs>
      <path d="M2 14c0 14 76 14 76 0l-9 74c-1 12-56 12-58 0z" fill="url(#tr)" opacity=".9" /><ellipse cx="40" cy="14" rx="38" ry="10" fill="#3c3f42" stroke="#a3a7aa" strokeWidth="1.500" />
      <path d="M10 12l12-10 8 5 8-5 6 6 8-7 8 10 10 2-6 10-12-4-8 6-12-4-8 5-10-6z" fill="#dcdedf" /><path d="M12 12l10-5 5 8M40 4l6 12 8-8M60 10l6 8" stroke="#6e7174" strokeWidth="1.500" fill="none" /><path d="M22 14l8-2-2 8-6-2z" fill="#3aa9a0" /><path d="M44 14l4-5 7 10-8 1z" fill="#7a4a38" /><path d="M54 14l5 5h-5z" fill="#3c62b8" /></svg>) },
];

/* ---------- data ---------- */

const posts: [number, string, string, number, string][] = [
  [17, 'ㅁㄴㅇㄹ', 'ssafy', 114, '2024-04-26 10:01:30'],
  [16, '아하하', 'cookingTorch', 31, '2024-04-26 09:37:49'],
  [15, '안녕adsf안녕', 'ssafy', 4, '2024-04-05 14:13:17'],
  [13, 'abcdabc', 'ssafy', 4, '2024-04-05 13:59:26'],
  [12, 'abcabc', 'ssafy', 0, '2024-04-05 13:58:55'],
  [10, 'ddddd', 'ssafy', 2, '2024-04-05 13:35:10'],
  [9, 'dddd', 'ssafy', 1, '2024-04-05 13:35:06'],
  [7, 'dd', 'ssafy', 3, '2024-04-05 13:31:41'],
  [6, 'dd', 'ssafy', 2, '2024-04-05 12:08:27'],
  [5, 'aabbcc', 'ssafy', 5, '2024-04-05 12:07:58'],
];

const titleSpacing = (t: string) => (!/[a-z]/.test(t) ? -1.6 : /[가-힣]/.test(t) ? -1.15 : -0.9);

const logoLines = ['SAMSUNG', 'SW', 'ACADEMY', 'FOR', 'YOUTH'];

export default function App() {
  return (
    <Desktop>
      <GlobalStyle />
      <MenuBar>
        <AppleMark><FaApple size={34} /></AppleMark>
        <MenuItem $w={141} $bold>Chrome</MenuItem>
        {menus.map(([t, w]) => <MenuItem key={t} $w={w}>{t}</MenuItem>)}
        <StatusArea>
          <StatusIcons />
          <Clock>5월 15일 (수) 오후 10:21</Clock>
        </StatusArea>
      </MenuBar>

      <Window>
        <BrowserHead>
          <TabStrip>
            <Lights><Light $c="#ec6a5e" /><Light $c="#f4bf4f" /><Light $c="#61c554" /></Lights>
            <TabFlare $side="left" />
            <Tab><VueMark w={32} /><TabTitle>Vite App</TabTitle><X size={24} strokeWidth={2.400} /></Tab>
            <TabFlare $side="right" />
            <NewTab><Plus size={28} strokeWidth={2.200} /></NewTab>
            <TabSearch><ChevronDown size={24} strokeWidth={2.600} /></TabSearch>
          </TabStrip>
          <Toolbar>
            <ToolSlot $w={72}><MdArrowBack size={36} /></ToolSlot>
            <ToolSlot $w={72} $dim><MdArrowForward size={36} /></ToolSlot>
            <ToolSlot $w={72}><MdRefresh size={37} /></ToolSlot>
            <Omnibox>
              <SiteInfo><MdOutlineInfo size={33} /></SiteInfo>
              <Address><b>localhost</b>:5173/board/list</Address>
              <ToolSlot $w={64}><MdOutlineVpnKey size={38} /></ToolSlot>
              <ToolSlot $w={64}><MdZoomOut size={38} /></ToolSlot>
              <ToolSlot $w={64}><MdStarBorder size={38} /></ToolSlot>
            </Omnibox>
            <ToolSlot $w={104}><Puzzle /></ToolSlot>
            <ToolDivider />
            <Avatar>
              <svg width="40" height="40" viewBox="0 0 40 40">
                <circle cx="20" cy="20" r="20" fill="#639bf2" />
                <path d="M27 3l2 1-8 16-3-2z" fill="#8a5a2b" />
                <path d="M20 14c5 2 5 5 3 9-1 6-8 15-14 12-5-4 0-9 3-12 1-5 3-10 8-9z" fill="#f1b93f" stroke="#7a4d1e" />
                <path d="M8 13l24 12M8 34c5 4 10 0 13-4" stroke="#c73a4e" strokeWidth="1.500" fill="none" />
                <path d="M9 9v6M30 11v6l4-1v-5zM28 27v6" stroke="#16223a" strokeWidth="2" fill="none" />
              </svg>
            </Avatar>
            <UpdateButton>
              새로운 Chrome 사용 가능
              <svg width="6" height="28" viewBox="0 0 6 28" fill="#cfe5fb"><circle cx="3" cy="3" r="3" /><circle cx="3" cy="14" r="3" /><circle cx="3" cy="25" r="3" /></svg>
            </UpdateButton>
          </Toolbar>
          <BookmarkBar>
            {bookmarks.map(([icon, label, w, ls]) => (
              <Bookmark key={label} $w={w} $ls={ls}>{markIcons[icon]}{label}</Bookmark>
            ))}
            <ChevronsRight size={32} strokeWidth={2.200} />
          </BookmarkBar>
        </BrowserHead>

        <Page>
          <Navbar>
            <svg width="100" height="73" viewBox="0 0 100 73">
              <path d="M0 0h72v57l28 16H29L0 57z" fill="#000" />
              {logoLines.map((l, i) => (
                <text key={l} x="7" y={14.500 + i * 9.700} fontFamily="Lato, sans-serif" fontSize="10.400" fontWeight="700" fill="#fff" letterSpacing="-0.3">
                  <tspan fill="#9bd6f2">{l[0]}</tspan>{l.slice(1)}
                </text>
              ))}
            </svg>
            <Brand>Enjoy Trip</Brand>
            <NavLink $w={148}>지역별여행지</NavLink>
            <NavLink $w={180}>나만의 여행계획</NavLink>
            <NavLink $w={148}>핫플자랑하기</NavLink>
            <NavLink $w={142} $ls={-1.1}>Q&amp;A 게시판</NavLink>
            <UserLinks>
              <NavLink $w={94} $ls={-1.3}>토치 님 ,</NavLink>
              <NavLink $w={98}>로그아웃</NavLink>
              <NavLink $w={124}>마이페이지</NavLink>
            </UserLinks>
          </Navbar>

          <Board>
            <Title>Q&amp;A</Title>
            <Rule />
            <Controls>
              <WriteButton>글쓰기</WriteButton>
              <SearchGroup>
                <Condition>검색조건<Caret /></Condition>
                <Keyword>검색어...</Keyword>
                <SearchButton>검색</SearchButton>
              </SearchGroup>
            </Controls>
            <Table>
              <colgroup><col width="212" /><col width="377" /><col width="414" /><col width="212" /><col width="651" /></colgroup>
              <thead><tr><th>글번호</th><th>제목</th><th>작성자</th><th>조회수</th><th>작성일</th></tr></thead>
              <tbody>
                {posts.map(([no, title, author, hits, date]) => (
                  <tr key={no}>
                    <Cell $ls={-0.4}>{no}</Cell>
                    <Cell $link $ls={titleSpacing(title)}>{title}</Cell>
                    <Cell $ls={author === 'ssafy' ? -1.1 : -0.9}>{author}</Cell>
                    <Cell $ls={-0.4}>{hits}</Cell>
                    <Cell $ls={-0.5}>{date}</Cell>
                  </tr>
                ))}
              </tbody>
            </Table>
            <Pager>
              <PagerItem $w={92}>이전</PagerItem>
              <PagerItem $w={58} $active>1</PagerItem>
              <PagerItem $w={58}>2</PagerItem>
              <PagerItem $w={94} $line>다음</PagerItem>
            </Pager>
          </Board>

          <Footer>
            <Copyright>Enjoy! trip © 2024</Copyright>
            <FooterLink $w={104}>회사소개</FooterLink><FooterBar />
            <FooterLink $w={209}>개인정보처리방침</FooterLink><FooterBar />
            <FooterLink $w={105}>이용약관</FooterLink><FooterBar />
            <FooterLink $w={170}>제휴/광고안내</FooterLink>
          </Footer>
          <DevtoolsButton><VueMark w={26} a="#8b8b8b" b="#4a4a4a" /></DevtoolsButton>
        </Page>
      </Window>

      <DockArea>
        <DockBar>
          {apps.map((a, i) => a.name === '|' ? <DockDivider key={i} /> : (
            <DockSlot key={a.name}>
              <DockIcon>{a.node}</DockIcon>
              {a.on && <RunningDot />}
            </DockSlot>
          ))}
        </DockBar>
      </DockArea>
    </Desktop>
  );
}
